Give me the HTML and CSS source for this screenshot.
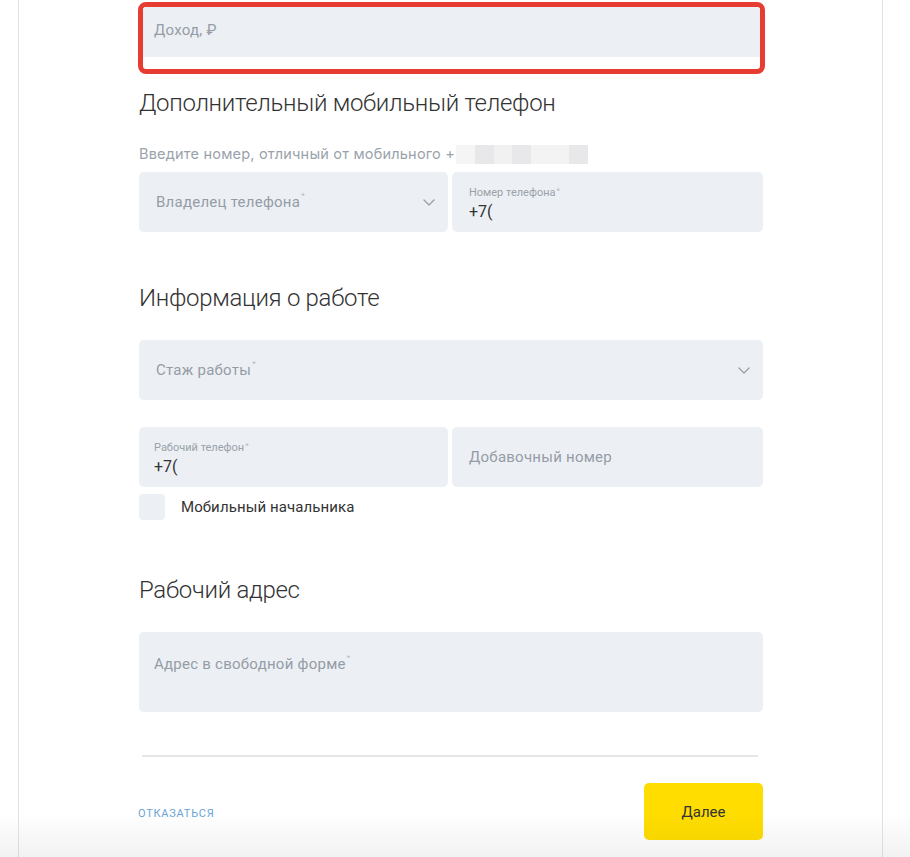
FILE: index.html
```html
<!DOCTYPE html>
<html lang="ru">
<head>
<meta charset="utf-8">
<title>Анкета</title>
<link rel="stylesheet" href="styles.css">
</head>
<body>
<div class="page">
  <div class="card">
    <div class="form">
      <div class="highlight">
        <div class="field field-income"><span class="placeholder">Доход, ₽</span></div>
      </div>

      <h2 class="heading h-phone">Дополнительный мобильный телефон</h2>
      <p class="hint">Введите номер, отличный от мобильного +<span class="blur"><i class="b1"></i><i class="b2"></i><i class="b3"></i><i class="b2"></i><i class="b4"></i><i class="b2"></i></span></p>
      <div class="row">
        <div class="field select"><span class="placeholder">Владелец телефона<sup>*</sup></span>
          <svg class="chev" width="12" height="7" viewBox="0 0 12 7"><path d="M1 1l5 5 5-5" fill="none" stroke="#9aa0a8" stroke-width="1.4" stroke-linecap="round" stroke-linejoin="round"/></svg>
        </div>
        <div class="field filled"><span class="label">Номер телефона<sup>*</sup></span><span class="value">+7(</span></div>
      </div>

      <h2 class="heading h-work">Информация о работе</h2>
      <div class="field select"><span class="placeholder">Стаж работы<sup>*</sup></span>
        <svg class="chev" width="12" height="7" viewBox="0 0 12 7"><path d="M1 1l5 5 5-5" fill="none" stroke="#9aa0a8" stroke-width="1.4" stroke-linecap="round" stroke-linejoin="round"/></svg>
      </div>
      <div class="row row-work">
        <div class="field filled tight"><span class="label">Рабочий телефон<sup>*</sup></span><span class="value">+7(</span></div>
        <div class="field"><span class="placeholder">Добавочный номер</span></div>
      </div>
      <label class="check"><span class="box"></span><span class="check-text">Мобильный начальника</span></label>

      <h2 class="heading h-addr">Рабочий адрес</h2>
      <div class="field area"><span class="placeholder">Адрес в свободной форме<sup>*</sup></span></div>

      <div class="divider"></div>
      <div class="actions">
        <a class="cancel" href="#">Отказаться</a>
        <button class="next" type="button">Далее</button>
      </div>
    </div>
  </div>
  <div class="fade"></div>
</div>
</body>
</html>
```

FILE: styles.css
```css
* { box-sizing: border-box; }
html, body { margin: 0; padding: 0; background: #fff; }
body { font-family: Roboto, "Noto Sans", "Liberation Sans", sans-serif; color: #333; }

.page { position: relative; width: 910px; height: 857px; overflow: hidden; }
.card {
  margin: 0 27px 0 18px;
  height: 100%;
  border-left: 1px solid #e3e3e3;
  border-right: 1px solid #e3e3e3;
  padding: 2px 0 0 120px;
}
.form { width: 624px; }

.highlight {
  margin-left: -1px;
  width: 627px;
  border: 5px solid #e63c31;
  border-radius: 8px;
  padding-bottom: 12px;
}
.field {
  position: relative;
  height: 60px;
  background: #ecf0f5;
  border-radius: 5px;
  padding: 0 17px;
  display: flex;
  align-items: center;
}
.field-income {
  height: 50px;
  border-radius: 3px 3px 0 0;
  padding-left: 11px;
  align-items: flex-start;
  padding-top: 14px;
}
.placeholder { font-size: 15px; color: #959ca5; letter-spacing: 0.25px; }
.placeholder sup, .label sup { font-size: 8px; vertical-align: top; position: relative; top: -2px; margin-left: 1px; color: #b3b8bf; }

.heading {
  margin: 0;
  font-weight: 300;
  font-size: 24px;
  line-height: 32px;
  color: #333;
  letter-spacing: -0.3px;
}
.h-phone { margin-top: 13px; }
.h-work { margin-top: 50px; margin-bottom: 26px; }
.h-addr { margin-top: 54px; margin-bottom: 26px; }

.hint {
  margin: 25px 0 8px;
  font-family: Inter, Roboto, sans-serif;
  font-size: 14.5px;
  line-height: 20px;
  color: #9aa2ab;
  letter-spacing: 0.2px;
  display: flex;
  align-items: center;
}
.blur { display: inline-flex; height: 19px; margin-left: 1px; }
.blur i { display: block; height: 19px; }
.blur .b1 { width: 19px; background: #f5f5f6; }
.blur .b2 { width: 19px; background: #e8e8ea; }
.blur .b3 { width: 18px; background: #f1f1f2; }
.blur .b4 { width: 38px; background: #f3f3f4; }

.row { display: grid; grid-template-columns: 309px 311px; gap: 4px; }
.row-work { margin-top: 27px; }

.select { justify-content: space-between; }
.select .chev { margin-right: -4px; }

.filled { flex-direction: column; align-items: flex-start; justify-content: flex-start; padding-top: 15px; }
.tight { padding-left: 15px; }
.label { font-size: 11px; line-height: 12px; color: #9aa1a9; }
.value { font-size: 16px; line-height: 20px; color: #333; margin-top: 3px; }

.check { display: flex; align-items: center; margin-top: 7px; height: 26px; cursor: pointer; }
.box { width: 26px; height: 26px; border-radius: 4px; background: #ecf0f5; }
.check-text { margin-left: 16px; font-size: 15px; color: #333; letter-spacing: 0.1px; }

.area { height: 80px; align-items: flex-start; padding-top: 23px; padding-left: 15px; }

.divider { margin: 43px 5px 0 3px; height: 2px; background: #e6e6e6; }

.actions { display: flex; justify-content: space-between; align-items: center; margin-top: 26px; }
.cancel {
  margin-left: -1px;
  margin-top: 3px;
  font-size: 11px;
  text-transform: uppercase;
  color: #6aa4da;
  text-decoration: none;
  letter-spacing: 0.75px;
}
.next {
  width: 119px;
  height: 57px;
  border: none;
  border-radius: 5px;
  background: #ffdd00;
  font-family: inherit;
  font-size: 15px;
  color: #333;
  cursor: pointer;
}

.fade {
  position: absolute;
  left: 0; right: 0; bottom: 0;
  height: 45px;
  background: linear-gradient(to bottom, rgba(0,0,0,0), rgba(0,0,0,0.05));
  pointer-events: none;
}
```
